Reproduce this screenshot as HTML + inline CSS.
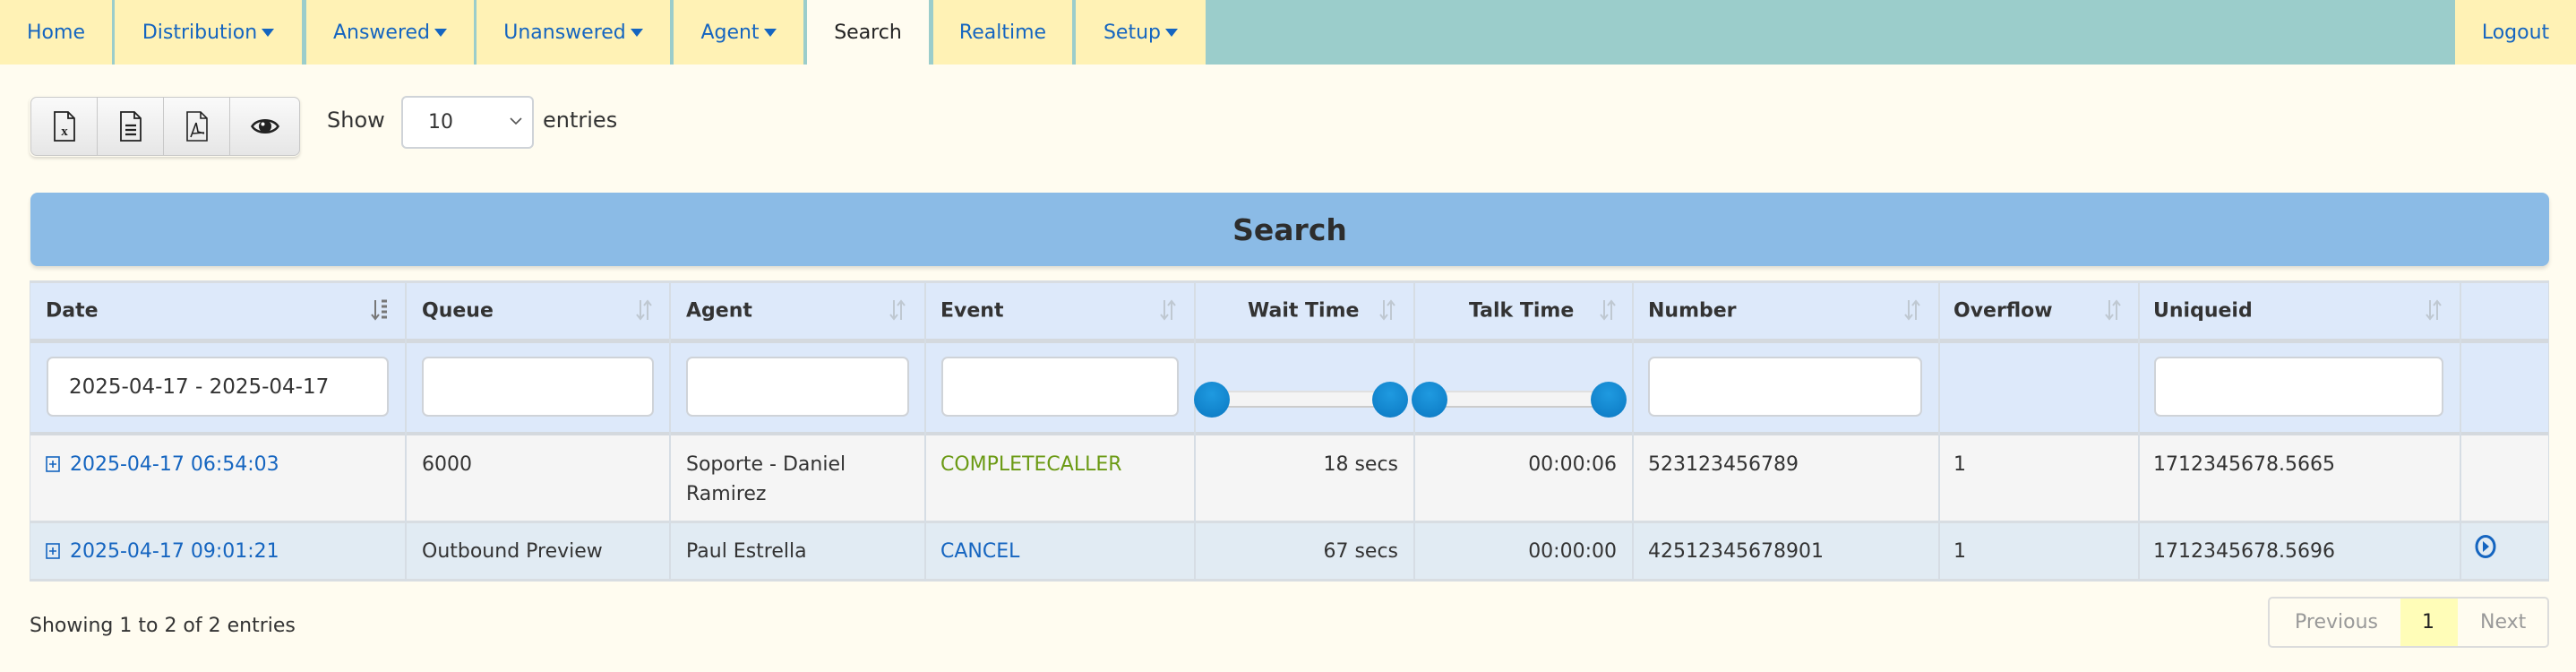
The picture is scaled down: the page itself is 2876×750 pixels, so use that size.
<!DOCTYPE html>
<html><head><meta charset="utf-8">
<style>
*{box-sizing:border-box;margin:0;padding:0}
body{width:2876px;height:750px;background:#fffcf0;font-family:"DejaVu Sans","Liberation Sans",sans-serif;font-size:22px;color:#333;position:relative;overflow:hidden}
.a{position:absolute}
.tab{position:absolute;top:0;height:72px;background:#fff2b5;color:#1565c0;font-size:22px;display:flex;align-items:center;justify-content:center;white-space:nowrap}
.car{display:inline-block;width:0;height:0;border-left:7px solid transparent;border-right:7px solid transparent;border-top:9px solid #1565c0;margin-left:5px;vertical-align:middle}
.btn{position:absolute;top:108px;width:75px;height:66px;background:linear-gradient(#fafafa,#e6e6e6);border:1px solid #c8c8c8;display:flex;align-items:center;justify-content:center}
.inp{position:absolute;background:#fff;border:2px solid #cfd3d8;border-radius:7px}
.vl{position:absolute;width:2px;background:#d6dde4}
.th{position:absolute;top:347px;transform:translateY(-50%);font-weight:bold;font-size:22px;color:#333}
.td{position:absolute;font-size:22px;color:#333;white-space:nowrap}
.lnk{color:#1565c0}
.h{position:absolute;width:40px;height:40px;border-radius:50%;background:radial-gradient(circle at 50% 35%,#1f9ae0,#0b78c2);top:426px}
.trk{position:absolute;top:436px;height:19px;background:#f4f4f4;border-top:2px solid #e0e0e0;border-bottom:2px solid #ccc}
</style></head><body>
<div class="a" style="left:0;top:0;width:2876px;height:72px;background:#9bcdcb"></div>
<div class="tab" style="left:0;width:125px">Home</div>
<div class="tab" style="left:128px;width:209px">Distribution<span class="car"></span></div>
<div class="tab" style="left:342px;width:187px">Answered<span class="car"></span></div>
<div class="tab" style="left:532px;width:216px">Unanswered<span class="car"></span></div>
<div class="tab" style="left:752px;width:145px">Agent<span class="car"></span></div>
<div class="tab" style="left:901px;width:136px;background:#fffcf0;color:#222">Search</div>
<div class="tab" style="left:1042px;width:155px">Realtime</div>
<div class="tab" style="left:1201px;width:145px">Setup<span class="car"></span></div>
<div class="tab" style="left:2741px;width:135px">Logout</div>

<div class="a" style="left:33px;top:107px;width:302px;height:68px;border-radius:7px;box-shadow:0 2px 3px rgba(0,0,0,.15)"></div>
<div class="btn" style="left:34px;border-radius:7px 0 0 7px"><svg width="26" height="34" viewBox="0 0 26 34"><path d="M2 1h15l7 7v25H2z M17 1v7h7" fill="none" stroke="#222" stroke-width="1.8"/><text x="13" y="27" font-size="15" font-family="Liberation Serif" font-weight="bold" text-anchor="middle" fill="#222">x</text></svg></div>
<div class="btn" style="left:108px"><svg width="26" height="34" viewBox="0 0 26 34"><path d="M2 1h15l7 7v25H2z M17 1v7h7" fill="none" stroke="#222" stroke-width="1.8"/><path d="M7 16h12M7 21h12M7 26h12" stroke="#222" stroke-width="2.2"/></svg></div>
<div class="btn" style="left:182px"><svg width="26" height="34" viewBox="0 0 26 34"><path d="M2 1h15l7 7v25H2z M17 1v7h7 M12 13l-6 16 M12 13l2 10l7 2 M8 25l13-1" fill="none" stroke="#222" stroke-width="1.6"/></svg></div>
<div class="btn" style="left:256px;width:79px;border-radius:0 7px 7px 0"><svg width="32" height="24" viewBox="0 0 32 24"><path d="M1.5 12C7 3 25 3 30.5 12C25 21 7 21 1.5 12z" fill="none" stroke="#222" stroke-width="2.6"/><circle cx="16" cy="12" r="7" fill="#222"/><circle cx="13.5" cy="9.5" r="2" fill="#fff"/></svg></div>

<div class="td" style="left:365px;top:120px;font-size:24px">Show</div>
<div class="inp" style="left:448px;top:107px;width:148px;height:59px;border-width:2px;border-radius:6px"></div>
<div class="td" style="left:478px;top:124px">10</div>
<svg class="a" style="left:568px;top:129px" width="16" height="12"><path d="M2 3l6 6 6-6" fill="none" stroke="#555" stroke-width="1.6"/></svg>
<div class="td" style="left:606px;top:120px;font-size:24px">entries</div>

<div class="a" style="left:34px;top:215px;width:2812px;height:82px;background:#8bbbe6;border-radius:8px;box-shadow:0 3px 4px rgba(0,0,0,.12);display:flex;align-items:center;justify-content:center;font-weight:bold;font-size:33px;color:#2d2d2d">Search</div>

<div class="a" style="left:33px;top:313px;width:2813px;height:69px;background:#dde9fa;border-top:3px solid #d8dde2"></div>
<div class="a" style="left:33px;top:378px;width:2813px;height:5px;background:#d4d9de"></div>
<div class="a" style="left:33px;top:383px;width:2813px;height:100px;background:#dde9fa"></div>
<div class="a" style="left:33px;top:482px;width:2813px;height:4px;background:#d4d9de"></div>
<div class="a" style="left:33px;top:486px;width:2813px;height:96px;background:#f5f5f5"></div>
<div class="a" style="left:33px;top:581px;width:2813px;height:3px;background:#d8dde2"></div>
<div class="a" style="left:33px;top:584px;width:2813px;height:63px;background:#e1ebf3"></div>
<div class="a" style="left:33px;top:646px;width:2813px;height:3px;background:#d8dde2"></div>
<div class="a" style="left:33px;top:313px;width:1px;height:336px;background:#d6dde4"></div>
<div class="vl" style="left:452px;top:313px;height:336px"></div>
<div class="vl" style="left:747px;top:313px;height:336px"></div>
<div class="vl" style="left:1032px;top:313px;height:336px"></div>
<div class="vl" style="left:1333px;top:313px;height:336px"></div>
<div class="vl" style="left:1578px;top:313px;height:336px"></div>
<div class="vl" style="left:1822px;top:313px;height:336px"></div>
<div class="vl" style="left:2164px;top:313px;height:336px"></div>
<div class="vl" style="left:2387px;top:313px;height:336px"></div>
<div class="vl" style="left:2746px;top:313px;height:336px"></div>
<div class="a" style="left:2845px;top:313px;width:1px;height:336px;background:#d6dde4"></div>

<div class="th" style="left:51px">Date</div>
<svg class="a" style="left:414px;top:333px" width="20" height="26"><path d="M5 2v20M1 18l4 5 4-5" fill="none" stroke="#777" stroke-width="2"/><path d="M12 3h6M12 9h6M12 15h6M12 21h6" stroke="#777" stroke-width="3"/></svg>
<div class="th" style="left:471px">Queue</div>
<div class="th" style="left:766px">Agent</div>
<div class="th" style="left:1050px">Event</div>
<div class="th" style="left:1393px">Wait Time</div>
<div class="th" style="left:1640px">Talk Time</div>
<div class="th" style="left:1840px">Number</div>
<div class="th" style="left:2181px">Overflow</div>
<div class="th" style="left:2404px">Uniqueid</div>
<svg width="0" height="0" style="position:absolute"><defs><g id="s"><path d="M5 2v20M1 18l4 5 4-5M13 24V4M9 8l4-5 4 5" fill="none" stroke="#bfc8d1" stroke-width="2"/></g></defs></svg>
<svg class="a" style="left:710px;top:333px" width="20" height="26"><use href="#s"/></svg>
<svg class="a" style="left:993px;top:333px" width="20" height="26"><use href="#s"/></svg>
<svg class="a" style="left:1295px;top:333px" width="20" height="26"><use href="#s"/></svg>
<svg class="a" style="left:1540px;top:333px" width="20" height="26"><use href="#s"/></svg>
<svg class="a" style="left:1786px;top:333px" width="20" height="26"><use href="#s"/></svg>
<svg class="a" style="left:2126px;top:333px" width="20" height="26"><use href="#s"/></svg>
<svg class="a" style="left:2350px;top:333px" width="20" height="26"><use href="#s"/></svg>
<svg class="a" style="left:2708px;top:333px" width="20" height="26"><use href="#s"/></svg>

<div class="inp" style="left:52px;top:398px;width:382px;height:67px"></div>
<div class="td" style="left:77px;top:419px;font-size:23px">2025-04-17 - 2025-04-17</div>
<div class="inp" style="left:471px;top:398px;width:259px;height:67px"></div>
<div class="inp" style="left:766px;top:398px;width:249px;height:67px"></div>
<div class="inp" style="left:1051px;top:398px;width:265px;height:67px"></div>
<div class="inp" style="left:1840px;top:398px;width:306px;height:67px"></div>
<div class="inp" style="left:2405px;top:398px;width:323px;height:67px"></div>
<div class="trk" style="left:1352px;width:200px"></div>
<div class="trk" style="left:1595px;width:200px"></div>
<div class="h" style="left:1333px"></div>
<div class="h" style="left:1532px"></div>
<div class="h" style="left:1576px"></div>
<div class="h" style="left:1776px"></div>

<svg class="a" style="left:51px;top:509px" width="16" height="18"><rect x="1" y="1" width="14" height="16" fill="none" stroke="#1565c0" stroke-width="1.6"/><path d="M4 9h8M8 5v8" stroke="#1565c0" stroke-width="1.6"/></svg>
<div class="td lnk" style="left:78px;top:506px">2025-04-17 06:54:03</div>
<div class="td" style="left:471px;top:506px">6000</div>
<div class="td" style="left:766px;top:506px">Soporte - Daniel</div>
<div class="td" style="left:766px;top:539px">Ramirez</div>
<div class="td" style="left:1050px;top:506px;color:#6b9a14">COMPLETECALLER</div>
<div class="td" style="right:1315px;top:506px">18 secs</div>
<div class="td" style="right:1071px;top:506px">00:00:06</div>
<div class="td" style="left:1840px;top:506px">523123456789</div>
<div class="td" style="left:2181px;top:506px">1</div>
<div class="td" style="left:2404px;top:506px">1712345678.5665</div>

<svg class="a" style="left:51px;top:606px" width="16" height="18"><rect x="1" y="1" width="14" height="16" fill="none" stroke="#1565c0" stroke-width="1.6"/><path d="M4 9h8M8 5v8" stroke="#1565c0" stroke-width="1.6"/></svg>
<div class="td lnk" style="left:78px;top:603px">2025-04-17 09:01:21</div>
<div class="td" style="left:471px;top:603px">Outbound Preview</div>
<div class="td" style="left:766px;top:603px">Paul Estrella</div>
<div class="td lnk" style="left:1050px;top:603px">CANCEL</div>
<div class="td" style="right:1315px;top:603px">67 secs</div>
<div class="td" style="right:1071px;top:603px">00:00:00</div>
<div class="td" style="left:1840px;top:603px">42512345678901</div>
<div class="td" style="left:2181px;top:603px">1</div>
<div class="td" style="left:2404px;top:603px">1712345678.5696</div>
<svg class="a" style="left:2762px;top:596px" width="26" height="28"><ellipse cx="13" cy="14" rx="10" ry="11.5" fill="none" stroke="#1565c0" stroke-width="3"/><path d="M10 8l7 6-7 6z" fill="#1565c0"/></svg>

<div class="td" style="left:33px;top:686px">Showing 1 to 2 of 2 entries</div>
<div class="a" style="left:2532px;top:666px;width:314px;height:57px;border:2px solid #dcdcdc;border-radius:5px;background:#fffcf0"></div>
<div class="td" style="left:2562px;top:682px;color:#999">Previous</div>
<div class="a" style="left:2680px;top:668px;width:64px;height:53px;background:#fffdb8"></div>
<div class="td" style="left:2704px;top:682px;color:#222">1</div>
<div class="td" style="left:2769px;top:682px;color:#999">Next</div>
</body></html>
